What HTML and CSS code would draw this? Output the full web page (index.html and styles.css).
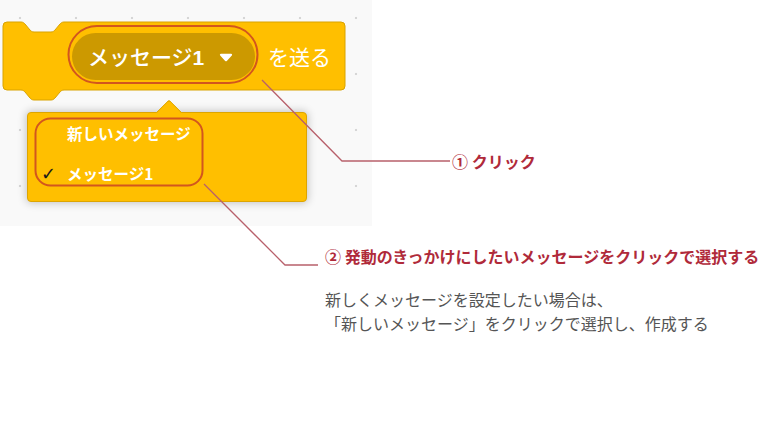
FILE: index.html
```html
<!DOCTYPE html>
<html lang="ja">
<head>
<meta charset="utf-8">
<title>メッセージを送る</title>
<link rel="stylesheet" href="styles.css">
</head>
<body>
<div class="page">
  <div class="workspace">
    <div class="block">
      <svg class="block-shape" width="344" height="81" viewBox="-1 -1 344 81">
        <path d="M0,4 A4,4 0 0 1 4,0 H18 C20,0 21,1 22,2 L27,8 C28,9 29,10 31,10 H48 C50,10 51,9 52,8 L57,2 C58,1 59,0 61,0 H338 A4,4 0 0 1 342,4 V64 A4,4 0 0 1 338,68 H61 C59,68 58,69 57,70 L52,76 C51,77 50,78 48,78 H31 C29,78 28,77 27,76 L22,70 C21,69 20,68 18,68 H4 A4,4 0 0 1 0,64 Z" fill="#FFBF00" stroke="#D9A300" stroke-width="1"/>
      </svg>
      <div class="pill">
        <span class="pill-text">メッセージ<b>1</b></span>
        <svg class="caret" width="14" height="9" viewBox="0 0 14 9"><path d="M2 1.8 H12 L7 7.2 Z" fill="#fff" stroke="#fff" stroke-width="2.2" stroke-linejoin="round"/></svg>
      </div>
      <span class="block-label">を送る</span>
    </div>
    <div class="menu">
      <div class="menu-item"><span class="check"></span>新しいメッセージ</div>
      <div class="menu-item"><span class="check">✓</span>メッセージ1</div>
    </div>
  </div>
  <div class="side">
    <p class="callout callout-one">① クリック</p>
  </div>
  <div class="notes">
    <p class="callout callout-two">② 発動のきっかけにしたいメッセージをクリックで選択する</p>
    <p class="note">新しくメッセージを設定したい場合は、<br>「新しいメッセージ」をクリックで選択し、作成する</p>
  </div>
  <svg class="overlay" width="760" height="428" viewBox="0 0 760 428">
    <rect x="68.5" y="26" width="189" height="57" rx="28.5" fill="none" stroke="#D2561E" stroke-width="2"/>
    <rect x="35.5" y="118.5" width="167" height="67" rx="15" fill="none" stroke="#D2561E" stroke-width="2"/>
    <path d="M262,80 L342,161 H450" fill="none" stroke="#B8606B" stroke-width="1.3"/>
    <path d="M204,184 L285,265 H318" fill="none" stroke="#B8606B" stroke-width="1.3"/>
  </svg>
</div>
</body>
</html>
```

FILE: styles.css
```css
* { box-sizing: border-box; }

html, body {
  margin: 0;
  padding: 0;
  background: #ffffff;
}

body {
  font-family: "Noto Sans CJK JP", "Noto Sans", sans-serif;
}

.page {
  position: relative;
  width: 760px;
  height: 428px;
  display: grid;
  grid-template-columns: 372px 1fr;
  grid-template-rows: 226px auto;
  overflow: hidden;
}

.workspace {
  position: relative;
  background-color: #f9f9f9;
  background-image: radial-gradient(circle, #d6d6d6 0, #d6d6d6 1px, rgba(214,214,214,0) 1.6px);
  background-size: 56px 56px;
  background-position: -8px -10px;
  padding: 22px 0 0 3px;
}

.block {
  position: relative;
  width: 342px;
  height: 68px;
  display: flex;
  align-items: center;
  padding-left: 69px;
}

.block-shape {
  position: absolute;
  left: -1px;
  top: -1px;
}

.pill {
  position: relative;
  width: 183px;
  height: 47px;
  margin-top: 1px;
  border-radius: 24px;
  background: #CC9900;
  display: flex;
  align-items: center;
  padding-left: 16px;
  color: #ffffff;
}

.pill-text {
  font-size: 21px;
  line-height: 1;
  font-weight: 500;
  letter-spacing: 0;
}

.pill-text b {
  font-family: "Liberation Sans", sans-serif;
  font-weight: 700;
}

.caret {
  margin-left: 15px;
  margin-top: 2px;
}

.block-label {
  position: relative;
  margin-left: 13px;
  font-size: 21px;
  line-height: 1;
  color: #ffffff;
}

.menu {
  position: absolute;
  left: 27px;
  top: 112px;
  width: 280px;
  height: 90px;
  background: #FFBF00;
  border: 1px solid #DDA500;
  border-radius: 4px;
  box-shadow: 0 0 8px 1px rgba(0, 0, 0, 0.22);
  padding: 0 0 8px;
}

.menu::before {
  content: "";
  position: absolute;
  left: 132px;
  top: -10px;
  width: 17px;
  height: 17px;
  background: #FFBF00;
  border-top: 1px solid #DDA500;
  border-left: 1px solid #DDA500;
  border-top-left-radius: 3px;
  transform: rotate(45deg);
}

.menu-item {
  position: relative;
  display: flex;
  align-items: center;
  height: 40px;
  padding-left: 13px;
  font-size: 15.5px;
  font-weight: 700;
  color: #ffffff;
}

.check {
  width: 26px;
  font-family: "DejaVu Sans", sans-serif;
  font-size: 18px;
  font-weight: 700;
  color: #1a1a1a;
  font-style: italic;
}

.side {
  padding: 150px 0 0 80px;
}

.callout {
  margin: 0;
  font-size: 16px;
  line-height: 22px;
  font-weight: 700;
  color: #B02A3A;
  white-space: nowrap;
}

.notes {
  grid-column: 1 / 3;
  padding-left: 325px;
}

.callout-two {
  margin-top: 19px;
}

.note {
  margin: 20px 0 0;
  font-size: 16px;
  line-height: 24px;
  font-weight: 400;
  color: #555555;
  white-space: nowrap;
}

.overlay {
  position: absolute;
  left: 0;
  top: 0;
  pointer-events: none;
}
```
